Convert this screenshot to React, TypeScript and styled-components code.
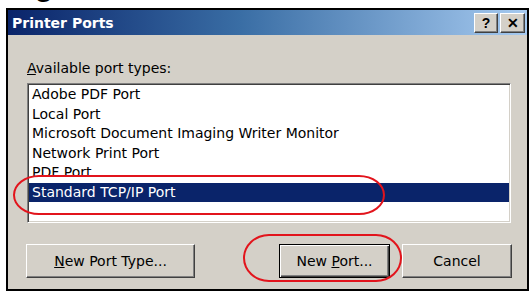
import React from "react";
import styled, { createGlobalStyle } from "styled-components";

const Global = createGlobalStyle`
  html, body { margin: 0; padding: 0; background: #fff; }
  body {
    width: 531px; height: 295px; overflow: hidden;
    font-family: "DejaVu Sans", Tahoma, sans-serif;
    -webkit-font-smoothing: antialiased;
  }
`;

const Page = styled.div`
  position: relative;
  width: 531px;
  height: 295px;
`;

const Caption = styled.div`
  height: 8px;
  overflow: hidden;
  padding-left: 8px;
  font: bold 30px "Liberation Sans", Arial, sans-serif;
  line-height: 30px;
  color: #000;
`;

const CaptionText = styled.div`
  margin-top: -29px;
  white-space: nowrap;
`;

const Window = styled.div`
  margin-left: 6px;
  width: 523px;
  height: 283px;
  box-sizing: border-box;
  border: 2px solid #000;
  background: #d4d0c8;
  display: flex;
  flex-direction: column;
`;

const TitleBar = styled.div`
  height: 25px;
  flex-shrink: 0;
  display: flex;
  align-items: center;
  padding: 0 2px 0 4px;
  background: linear-gradient(to right, #0a246a 0%, #3a6ea5 45%, #a6caf0 100%);
`;

const Title = styled.div`
  flex: 1;
  color: #fff;
  font-weight: bold;
  font-size: 14px;
`;

const CaptionButtons = styled.div`
  display: flex;
  gap: 2px;
`;

const CaptionButton = styled.div<{ $w: number }>`
  width: ${(p) => p.$w}px;
  height: 20px;
  box-sizing: border-box;
  background: #d4d0c8;
  border: 1px solid;
  border-color: #fff #404040 #404040 #fff;
  box-shadow: inset -1px -1px #808080;
  display: flex;
  align-items: center;
  justify-content: center;
  font: bold 14px "Liberation Sans", Arial, sans-serif;
  color: #000;
`;

const Body = styled.div`
  flex: 1;
  display: flex;
  flex-direction: column;
  padding: 25px 16px 11px 19px;
`;

const Label = styled.div`
  font-size: 14px;
  line-height: 16px;
  color: #000;
`;

const ListBox = styled.div`
  margin-top: 7px;
  height: 140px;
  box-sizing: border-box;
  background: #fff;
  border: 1px solid;
  border-color: #808080 #fff #fff #808080;
  box-shadow: inset 1px 1px #404040, inset -1px -1px #d4d0c8;
  padding: 1px 1px;
`;

const Row = styled.div<{ $selected?: boolean }>`
  height: 19.5px;
  line-height: 19.5px;
  padding-left: 3px;
  font-size: 14px;
  white-space: nowrap;
  color: ${(p) => (p.$selected ? "#fff" : "#000")};
  background: ${(p) => (p.$selected ? "#0a246a" : "transparent")};
`;

const ButtonRow = styled.div`
  margin-top: 21px;
  margin-left: -1px;
  margin-right: -1px;
  display: flex;
  align-items: center;
  gap: 12px;
`;

const Spacer = styled.div`
  flex: 1;
`;

const Button = styled.div<{ $w: number; $default?: boolean }>`
  width: ${(p) => p.$w}px;
  height: 34px;
  box-sizing: border-box;
  background: #d4d0c8;
  border: 1px solid;
  border-color: ${(p) => (p.$default ? "#000" : "#fff #404040 #404040 #fff")};
  box-shadow: ${(p) =>
    p.$default
      ? "inset 1px 1px #fff, inset -1px -1px #404040, inset -2px -2px #808080"
      : "inset -1px -1px #808080"};
  display: flex;
  align-items: center;
  justify-content: center;
  font-size: 14px;
  color: #000;
`;

const Annotation = styled.div`
  position: absolute;
  box-sizing: border-box;
  border: 2px solid #e2141c;
  pointer-events: none;
`;

const rows = [
  "Adobe PDF Port",
  "Local Port",
  "Microsoft Document Imaging Writer Monitor",
  "Network Print Port",
  "PDF Port",
  "Standard TCP/IP Port",
];

export default function App() {
  return (
    <Page>
      <Global />
      <Caption>
        <CaptionText>Figure</CaptionText>
      </Caption>
      <Window>
        <TitleBar>
          <Title>Printer Ports</Title>
          <CaptionButtons>
            <CaptionButton $w={24}>?</CaptionButton>
            <CaptionButton $w={25}>✕</CaptionButton>
          </CaptionButtons>
        </TitleBar>
        <Body>
          <Label>
            <u>A</u>vailable port types:
          </Label>
          <ListBox>
            {rows.map((r, i) => (
              <Row key={r} $selected={i === 5}>
                {r}
              </Row>
            ))}
          </ListBox>
          <ButtonRow>
            <Button $w={169}>
              <span>
                <u>N</u>ew Port Type...
              </span>
            </Button>
            <Spacer />
            <Button $w={111} $default>
              <span>
                New <u>P</u>ort...
              </span>
            </Button>
            <Button $w={110}>Cancel</Button>
          </ButtonRow>
        </Body>
      </Window>
      <Annotation style={{ left: 13, top: 175, width: 372, height: 40, borderRadius: "26px / 20px" }} />
      <Annotation style={{ left: 243, top: 234, width: 159, height: 48, borderRadius: "26px / 24px" }} />
    </Page>
  );
}
